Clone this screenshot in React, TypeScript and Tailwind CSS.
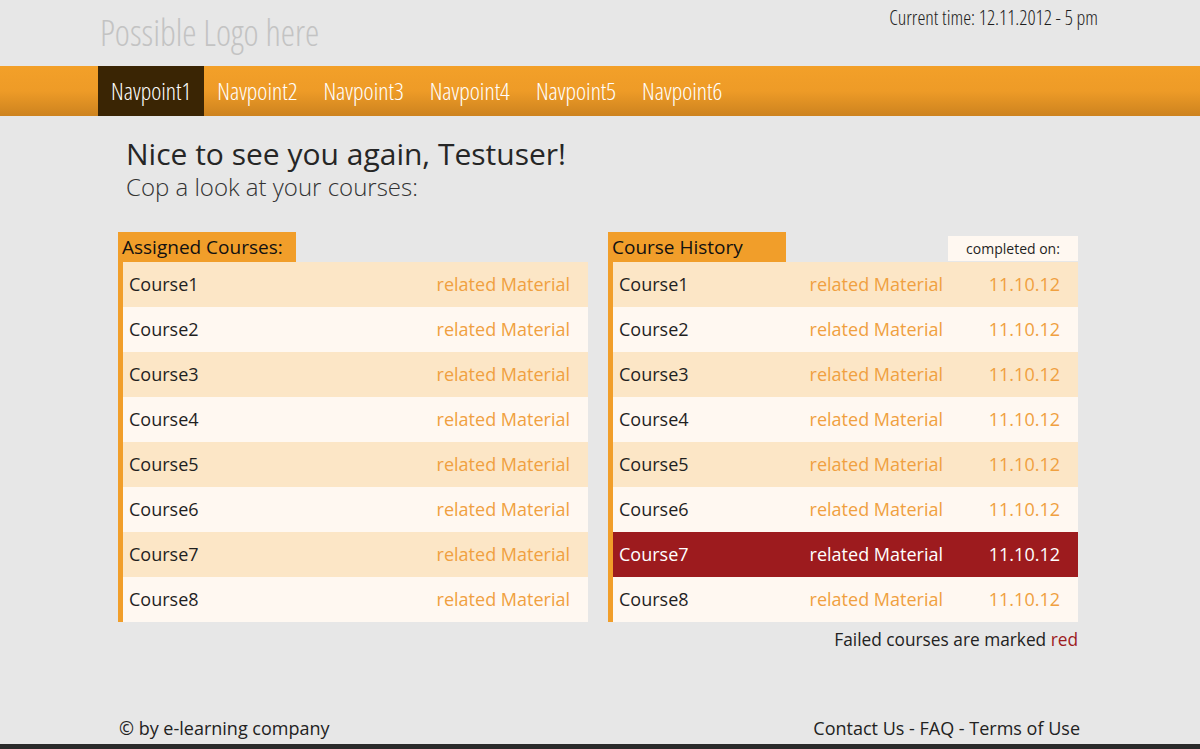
import React from 'react';

const COND = { fontFamily: "'Open Sans', sans-serif", fontStretch: '75%', fontWeight: 300 };

const navItems = ['Navpoint1', 'Navpoint2', 'Navpoint3', 'Navpoint4', 'Navpoint5', 'Navpoint6'];
const courses = [1, 2, 3, 4, 5, 6, 7, 8].map((n) => ({ name: `Course${n}`, date: '11.10.12', failed: n === 7 }));

export default function App() {
  return (
    <div className="min-h-[749px] bg-[#e7e7e7] flex flex-col text-[#222]" style={{ fontFamily: "'Open Sans', sans-serif" }}>
      {/* Header */}
      <div className="w-[1000px] mx-auto h-[66px] flex justify-between">
        <div className="text-[36px] leading-none text-[#c3c3c3] pt-[15px]" style={COND}>
          Possible Logo here
        </div>
        <div className="text-[20px] leading-none text-[#1e1e1e] pt-[8px] pr-[2px]" style={COND}>
          Current time: 12.11.2012 - 5 pm
        </div>
      </div>

      {/* Nav */}
      <div className="h-[50px] bg-gradient-to-b from-[#f3a029] via-[#ee9b27] to-[#cd831f]">
        <div className="w-[1004px] mx-auto flex h-full" style={{ marginLeft: 98 }}>
          {navItems.map((item, i) => (
            <div
              key={item}
              className={`h-full flex items-center px-[13px] pb-[1px] text-[24px] text-white ${i === 0 ? 'bg-[#3a2504]' : ''}`}
              style={COND}
            >
              {item}
            </div>
          ))}
        </div>
      </div>

      {/* Main */}
      <div className="w-[1000px] mx-auto pt-[20px] pl-[18px]">
        <h1 className="pl-[8px] text-[30px] leading-[36px] text-[#262626]">Nice to see you again, Testuser!</h1>
        <h2 className="pl-[8px] text-[24px] leading-[30px] font-light text-[#333]">Cop a look at your courses:</h2>

        <div className="flex gap-[20px] mt-[30px]">
          {/* Assigned */}
          <div className="w-[470px]">
            <div className="flex items-end h-[30px]">
              <div className="h-[30px] w-[178px] bg-[#f19e2a] pl-[4px] text-[19px] leading-[30px] text-[#111]">Assigned Courses:</div>
            </div>
            <div className="border-l-[5px] border-[#f19e2a]">
              {courses.map((c, i) => (
                <div
                  key={c.name}
                  className={`h-[45px] flex items-center justify-between pl-[6px] pr-[18px] text-[18px] ${i % 2 === 0 ? 'bg-[#fce6c6]' : 'bg-[#fff8f1]'}`}
                >
                  <span className="text-[#1f1f1f]">{c.name}</span>
                  <span className="text-[#f0a040]">related Material</span>
                </div>
              ))}
            </div>
          </div>

          {/* History */}
          <div className="w-[470px]">
            <div className="flex items-end justify-between h-[30px]">
              <div className="h-[30px] w-[178px] bg-[#f19e2a] pl-[4px] text-[19px] leading-[30px] text-[#111]">Course History</div>
              <div className="h-[25px] w-[130px] bg-[#fff8f1] text-[14px] leading-[25px] text-center text-[#1f1f1f] mb-[1px]">completed on:</div>
            </div>
            <div className="border-l-[5px] border-[#f19e2a]">
              {courses.map((c, i) => {
                const bg = c.failed ? 'bg-[#9d1b1e]' : i % 2 === 0 ? 'bg-[#fce6c6]' : 'bg-[#fff8f1]';
                return (
                  <div key={c.name} className={`h-[45px] flex items-center pl-[6px] pr-[18px] text-[18px] ${bg}`}>
                    <span className={`flex-1 ${c.failed ? 'text-white' : 'text-[#1f1f1f]'}`}>{c.name}</span>
                    <span className={`${c.failed ? 'text-white' : 'text-[#f0a040]'}`}>related Material</span>
                    <span className={`w-[117px] text-right ${c.failed ? 'text-white' : 'text-[#f0a040]'}`}>{c.date}</span>
                  </div>
                );
              })}
            </div>
            <div className="text-right text-[17.3px] leading-[24px] mt-[6px] text-[#222]">
              Failed courses are marked <span className="text-[#9d1b1e]">red</span>
            </div>
          </div>
        </div>
      </div>

      <div className="flex-1" />

      {/* Footer */}
      <div className="w-[961px] flex justify-between text-[18px] leading-[24px] text-[#222] pb-[4px]" style={{ marginLeft: 119 }}>
        <span>© by e-learning company</span>
        <span>Contact Us - FAQ - Terms of Use</span>
      </div>
      <div className="h-[5px] bg-[#2a2a2a]" />
    </div>
  );
}
